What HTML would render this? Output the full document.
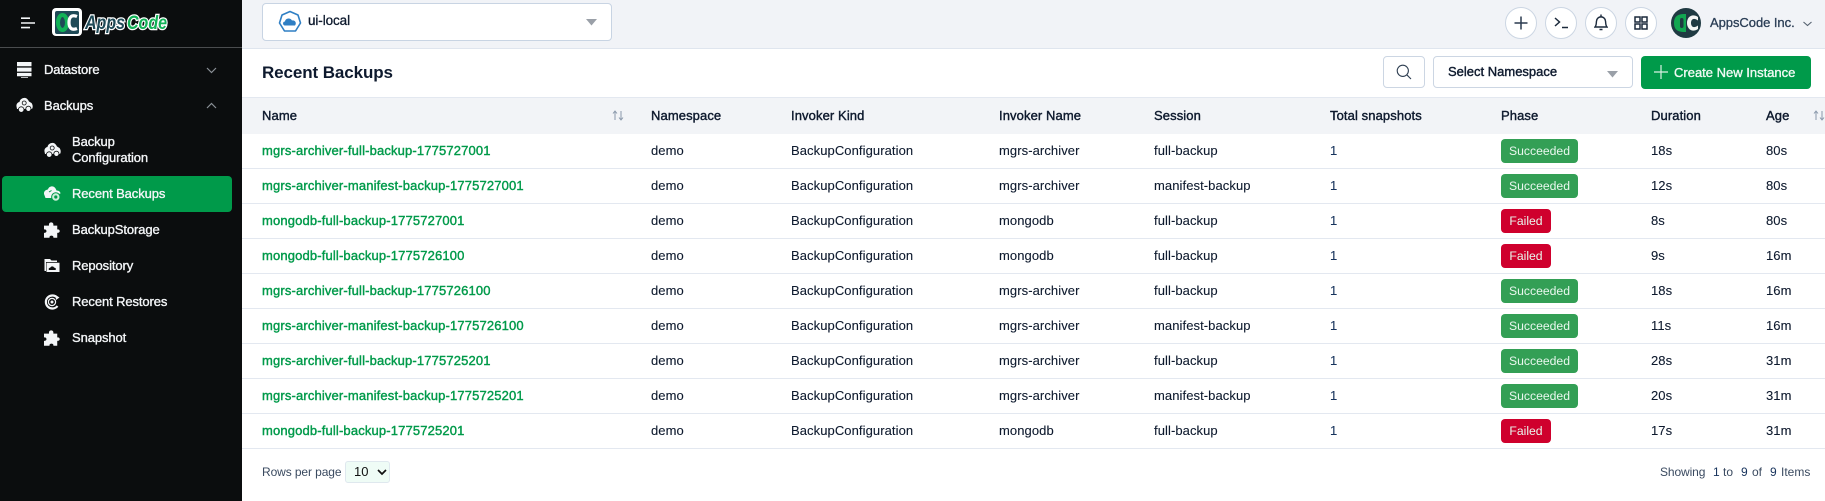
<!DOCTYPE html>
<html><head><meta charset="utf-8"><title>Recent Backups</title>
<style>
*{box-sizing:border-box}
html,body{margin:0;padding:0;width:1825px;height:501px;overflow:hidden;background:#fff;font-family:"Liberation Sans",Arial,sans-serif;color:#0e1a2e}
.a{position:absolute;white-space:nowrap}
.side{position:absolute;left:0;top:0;width:242px;height:501px;background:#0b0d0e;color:#f4f6f8}
.side .a{font-size:13px;line-height:16px;-webkit-text-stroke:.35px currentColor;letter-spacing:-.1px}
.side svg,.ic{position:absolute;display:block}
.row{position:absolute;left:242px;width:1583px;height:35px;border-bottom:1.5px solid #e3e8f0;font-size:13px}
.row span.c{position:absolute;top:0;line-height:33px;white-space:nowrap;letter-spacing:.08px;-webkit-text-stroke:.1px currentColor}
.row span.n{left:20px;color:#009a4a;-webkit-text-stroke:.4px #009a4a;letter-spacing:.15px}
.i{left:549px}.m{left:757px}.s{left:912px}.t{left:1088px;color:#17335c}.d{left:1409px}.g{left:1524px}
.b{position:absolute;left:1259px;top:5px;height:24px;border-radius:4px;color:#e9f7ee;font-size:12.2px;line-height:24px;text-align:center}
.ok{width:77px;background:#339f55}.no{width:50px;background:#cf002d}
.h{position:absolute;top:0;line-height:36px;font-size:13px;-webkit-text-stroke:.4px #0e1a2e;white-space:nowrap;letter-spacing:.1px}
.circ{position:absolute;top:7px;width:32px;height:32px;border-radius:50%;background:#fff;border:1px solid #ccd6e3}
</style></head><body>

<div class="side">
  <svg style="left:21px;top:17px" width="15" height="12"><path d="M0 1.2H9M0 6H14M0 10.6H9" stroke="#f4f6f8" stroke-width="1.6"/></svg>
  <svg style="left:51px;top:7px" width="122" height="31" viewBox="0 0 122 31">
    <rect x="1" y="1" width="30" height="28" rx="4" fill="#fff"/>
    <rect x="4" y="4" width="24" height="23" rx="2" fill="#1f4a57"/>
    <ellipse cx="11.500" cy="15.500" rx="4.500" ry="7.500" fill="none" stroke="#12b257" stroke-width="4"/>
    <path d="M26 9.500C20 7 18 11 18 15.500S20 24 26 21.500" fill="none" stroke="#fff" stroke-width="3.200"/>
    <text x="34" y="22" font-family="Liberation Sans,sans-serif" font-style="italic" font-weight="700" font-size="19" fill="#1f4a57" stroke="#fff" stroke-width="2.600" paint-order="stroke" textLength="40" lengthAdjust="spacingAndGlyphs">Apps</text>
    <text x="76" y="22" font-family="Liberation Sans,sans-serif" font-style="italic" font-weight="700" font-size="19" fill="#12b257" stroke="#fff" stroke-width="2.600" paint-order="stroke" textLength="40" lengthAdjust="spacingAndGlyphs">Code</text>
  </svg>
  <div style="position:absolute;left:0;top:47px;width:242px;height:1px;background:#4a4c4e"></div>

  <svg style="left:17px;top:62px" width="15" height="16"><path d="M0 0H14.500V4.300H0ZM0 5.600H14.500V9.600H0ZM0 10.900H14.500V14.200H0ZM4 15H11V15.800H4Z" fill="#f4f6f8"/></svg>
  <div class="a" style="left:44px;top:62px">Datastore</div>
  <svg style="left:206px;top:67px" width="11" height="7"><path d="M1 1L5.500 5.500L10 1" fill="none" stroke="#8a9096" stroke-width="1.200"/></svg>

  <svg style="left:16px;top:97px" width="17" height="16" viewBox="0 0 17 16"><path d="M.5 9.500C0 6.500 2.500 5 3.500 5C4 2 7 .500 9.500 1C11.500 1.500 12.500 3.500 13 4.500L15.500 6C17 8 17 10.500 16 12H1Z" fill="#f4f6f8"/><circle cx="5.200" cy="12.600" r="2.800" fill="#f4f6f8" stroke="#0b0d0e" stroke-width=".8"/><circle cx="12.400" cy="11.800" r="2.600" fill="#f4f6f8" stroke="#0b0d0e" stroke-width=".8"/><circle cx="8.200" cy="6" r="2" fill="none" stroke="#0b0d0e" stroke-width=".8"/></svg>
  <div class="a" style="left:44px;top:98px">Backups</div>
  <svg style="left:206px;top:102px" width="11" height="7"><path d="M1 6L5.500 1.500L10 6" fill="none" stroke="#8a9096" stroke-width="1.200"/></svg>

  <svg style="left:44px;top:142px" width="17" height="16" viewBox="0 0 17 16"><path d="M.5 9.500C0 6.500 2.500 5 3.500 5C4 2 7 .500 9.500 1C11.500 1.500 12.500 3.500 13 4.500L15.500 6C17 8 17 10.500 16 12H1Z" fill="#f4f6f8"/><circle cx="5.200" cy="12.600" r="2.800" fill="#f4f6f8" stroke="#0b0d0e" stroke-width=".8"/><circle cx="12.400" cy="11.800" r="2.600" fill="#f4f6f8" stroke="#0b0d0e" stroke-width=".8"/><circle cx="8.200" cy="6" r="2" fill="none" stroke="#0b0d0e" stroke-width=".8"/></svg>
  <div class="a" style="left:72px;top:134px">Backup</div>
  <div class="a" style="left:72px;top:150px">Configuration</div>

  <div style="position:absolute;left:2px;top:176px;width:230px;height:36px;border-radius:4px;background:#009a4a"></div>
  <svg style="left:44px;top:186px" width="17" height="16" viewBox="0 0 17 16"><path d="M0 8C-.5 5 2.500 3.500 4 3.500C4.500 1 7 0 9 .5C11 1 12 3 12.500 4.500C15 4.500 16.500 6 16.500 7.500L15 8H10V12H1.500Z" fill="#f4f6f8"/><circle cx="11.800" cy="11" r="4.200" fill="#cdeeda" stroke="#009a4a"/><circle cx="11.800" cy="11" r="1.600" fill="#009a4a"/><path d="M5 6L7.500 4.500" stroke="#009a4a"/></svg>
  <div class="a" style="left:72px;top:186px">Recent Backups</div>

  <svg style="left:44px;top:222px" width="16" height="16" viewBox="1 1 14.500 14"><path d="M5.500 3C5.500 .500 9.500 .500 9.500 3V4H13V7.500C16 7 16 11.200 13 10.500V15H9.500C10 12.500 5.500 12.500 6 15H1V10.500C4 11.200 4 7 1 7.500V4H5.500Z" fill="#f4f6f8"/></svg>
  <div class="a" style="left:72px;top:222px">BackupStorage</div>

  <svg style="left:44px;top:258px" width="16" height="15" viewBox="0 0 16 15"><path d="M.5 1H6L7.500 2.500H13V4H2V13H.5ZM2.500 4.700H15.500V14H2.500Z" fill="#f4f6f8"/><path d="M5 12C4 10.500 5.500 9.700 6.300 9.800C6.800 8 9.500 8 10 9.600C11.500 9.500 12.500 10.800 11.500 12Z" fill="#0b0d0e"/></svg>
  <div class="a" style="left:72px;top:258px">Repository</div>

  <svg style="left:44px;top:294px" width="16" height="16" viewBox="0 0 16 16"><path d="M13.500 4A6.500 6.500 0 1 0 13.500 12" fill="none" stroke="#f4f6f8" stroke-width="2.200"/><circle cx="8" cy="8" r="3.600" fill="none" stroke="#f4f6f8" stroke-width="1.200"/><circle cx="8" cy="8" r="1.500" fill="#f4f6f8"/><path d="M11.500 1L15.500 3.500L12 6Z" fill="#f4f6f8"/></svg>
  <div class="a" style="left:72px;top:294px">Recent Restores</div>

  <svg style="left:44px;top:330px" width="16" height="16" viewBox="1 1 14.500 14"><path d="M5.500 3C5.500 .500 9.500 .500 9.500 3V4H13V7.500C16 7 16 11.200 13 10.500V15H9.500C10 12.500 5.500 12.500 6 15H1V10.500C4 11.200 4 7 1 7.500V4H5.500Z" fill="#f4f6f8"/></svg>
  <div class="a" style="left:72px;top:330px">Snapshot</div>
</div>

<!-- top bar -->
<div style="position:absolute;left:242px;top:0;width:1583px;height:49px;background:#f1f3f7;border-bottom:1px solid #dfe5ee"></div>
<div style="position:absolute;left:262px;top:3px;width:350px;height:38px;background:#fff;border:1px solid #c8d4e3;border-radius:4px"></div>
<svg class="ic" style="left:278px;top:10px" width="24" height="24" viewBox="0 0 24 24"><path d="M12 1.500L20 5L22.500 13L17.500 21H6.500L1.500 13L4 5Z" fill="#fff" stroke="#2f7fc4" stroke-width="1.600" stroke-linejoin="round"/><path d="M6.500 15.500C4.500 15 4.500 11.500 7 11.500C7.500 8 12.500 7.500 14 10.500C17 9.800 19 13 17 15.500Z" fill="#2f7fc4"/></svg>
<div class="a" style="left:308px;top:12px;font-size:13.500px;line-height:17px;-webkit-text-stroke:.3px #0e1a2e;letter-spacing:-.1px">ui-local</div>
<svg class="ic" style="left:586px;top:19px" width="12" height="7"><path d="M0 0H11L5.500 6.500Z" fill="#9aa0a8"/></svg>

<div class="circ" style="left:1505px"></div>
<svg class="ic" style="left:1514px;top:16px" width="14" height="14"><path d="M7 .500V13.500M.500 7H13.500" stroke="#2a3a4f" stroke-width="1.500"/></svg>
<div class="circ" style="left:1545px"></div>
<svg class="ic" style="left:1554px;top:17px" width="15" height="12"><path d="M1 1L5.500 5L1 9M8 10.500H14" fill="none" stroke="#1c2a3c" stroke-width="1.500"/></svg>
<div class="circ" style="left:1585px"></div>
<svg class="ic" style="left:1594px;top:14px" width="14" height="18" viewBox="0 0 14 18"><path d="M1 13C2.500 11.500 2.200 9 2.500 7C3 1.500 11 1.500 11.500 7C11.800 9 11.500 11.500 13 13ZM5.500 15.500H8.500" fill="none" stroke="#1c2a3c" stroke-width="1.400"/><path d="M7 .500V2.500" stroke="#1c2a3c" stroke-width="1.400"/></svg>
<div class="circ" style="left:1625px"></div>
<svg class="ic" style="left:1634px;top:16px" width="14" height="14"><path d="M1 1H6V6H1ZM8 1H13V6H8ZM1 8H6V13H1ZM8 8H13V13H8Z" fill="none" stroke="#1c2a3c" stroke-width="1.500"/></svg>
<svg class="ic" style="left:1671px;top:8px" width="30" height="30" viewBox="0 0 30 30"><circle cx="15" cy="15" r="15" fill="#1f3a42"/><path d="M3 15C3 6 10 6 15 6V24C10 24 3 24 3 15Z" fill="#12a651"/><rect x="9" y="10" width="3.500" height="10" rx="1.700" fill="#1f3a42"/><path d="M27 9C21 5 16 9 16 15S21 25 27 21V17.500C22 21 20 18 20 15S22 9 27 12.500Z" fill="#f4f6f4"/></svg>
<div class="a" style="left:1710px;top:14px;font-size:13px;line-height:17px;color:#2a3d55;-webkit-text-stroke:.3px #2a3d55;letter-spacing:-.05px">AppsCode Inc.</div>
<svg class="ic" style="left:1803px;top:21px" width="9" height="6"><path d="M.500 1L4.500 4.500L8.500 1" fill="none" stroke="#55616f" stroke-width="1.100"/></svg>

<!-- title band -->
<div class="a" style="left:262px;top:62px;font-size:17px;line-height:22px;font-weight:700;letter-spacing:-.1px">Recent Backups</div>
<div style="position:absolute;left:1383px;top:56px;width:42px;height:32px;border:1px solid #ccd6e3;border-radius:4px;background:#fff"></div>
<svg class="ic" style="left:1396px;top:64px" width="16" height="16"><circle cx="6.800" cy="6.800" r="5.600" fill="none" stroke="#2f3f52" stroke-width="1.100"/><path d="M10.800 10.800L15 15" stroke="#2f3f52" stroke-width="1.100"/></svg>
<div style="position:absolute;left:1433px;top:56px;width:200px;height:32px;border:1px solid #ccd6e3;border-radius:4px;background:#fff"></div>
<div class="a" style="left:1448px;top:63px;font-size:13px;line-height:17px;-webkit-text-stroke:.4px #0e1a2e;letter-spacing:0">Select Namespace</div>
<svg class="ic" style="left:1607px;top:71px" width="12" height="7"><path d="M0 0H11L5.500 6.500Z" fill="#9aa0a8"/></svg>
<div style="position:absolute;left:1641px;top:56px;width:170px;height:33px;border-radius:4px;background:#009a4a"></div>
<svg class="ic" style="left:1654px;top:65px" width="14" height="14"><path d="M7 0V14M0 7H14" stroke="#d8f0e2" stroke-width="1.200"/></svg>
<div class="a" style="left:1674px;top:64px;font-size:13px;line-height:17px;color:#f2faf5;-webkit-text-stroke:.35px #f2faf5">Create New Instance</div>

<!-- table header -->
<div style="position:absolute;left:242px;top:97px;width:1583px;height:37px;background:#f2f4f7;border-top:1px solid #e3e8f0">
  <span class="h" style="left:20px">Name</span>
  <span class="h" style="left:409px">Namespace</span>
  <span class="h" style="left:549px">Invoker Kind</span>
  <span class="h" style="left:757px">Invoker Name</span>
  <span class="h" style="left:912px">Session</span>
  <span class="h" style="left:1088px">Total snapshots</span>
  <span class="h" style="left:1259px">Phase</span>
  <span class="h" style="left:1409px">Duration</span>
  <span class="h" style="left:1524px">Age</span>
</div>
<svg class="ic" style="left:612px;top:110px" width="12" height="11"><path d="M3 10V1.500M1 3.500L3 1L5 3.500M9 1V9.500M7 7.500L9 10L11 7.500" fill="none" stroke="#8a99ab" stroke-width="1"/></svg>
<svg class="ic" style="left:1813px;top:110px" width="12" height="11"><path d="M3 10V1.500M1 3.500L3 1L5 3.500M9 1V9.500M7 7.500L9 10L11 7.500" fill="none" stroke="#8a99ab" stroke-width="1"/></svg>

<!-- rows -->
<div class="row" style="top:134px"><span class="c n">mgrs-archiver-full-backup-1775727001</span><span class="c" style="left:409px">demo</span><span class="c i">BackupConfiguration</span><span class="c m">mgrs-archiver</span><span class="c s">full-backup</span><span class="c t">1</span><div class="b ok">Succeeded</div><span class="c d">18s</span><span class="c g">80s</span></div>
<div class="row" style="top:169px"><span class="c n">mgrs-archiver-manifest-backup-1775727001</span><span class="c" style="left:409px">demo</span><span class="c i">BackupConfiguration</span><span class="c m">mgrs-archiver</span><span class="c s">manifest-backup</span><span class="c t">1</span><div class="b ok">Succeeded</div><span class="c d">12s</span><span class="c g">80s</span></div>
<div class="row" style="top:204px"><span class="c n">mongodb-full-backup-1775727001</span><span class="c" style="left:409px">demo</span><span class="c i">BackupConfiguration</span><span class="c m">mongodb</span><span class="c s">full-backup</span><span class="c t">1</span><div class="b no">Failed</div><span class="c d">8s</span><span class="c g">80s</span></div>
<div class="row" style="top:239px"><span class="c n">mongodb-full-backup-1775726100</span><span class="c" style="left:409px">demo</span><span class="c i">BackupConfiguration</span><span class="c m">mongodb</span><span class="c s">full-backup</span><span class="c t">1</span><div class="b no">Failed</div><span class="c d">9s</span><span class="c g">16m</span></div>
<div class="row" style="top:274px"><span class="c n">mgrs-archiver-full-backup-1775726100</span><span class="c" style="left:409px">demo</span><span class="c i">BackupConfiguration</span><span class="c m">mgrs-archiver</span><span class="c s">full-backup</span><span class="c t">1</span><div class="b ok">Succeeded</div><span class="c d">18s</span><span class="c g">16m</span></div>
<div class="row" style="top:309px"><span class="c n">mgrs-archiver-manifest-backup-1775726100</span><span class="c" style="left:409px">demo</span><span class="c i">BackupConfiguration</span><span class="c m">mgrs-archiver</span><span class="c s">manifest-backup</span><span class="c t">1</span><div class="b ok">Succeeded</div><span class="c d">11s</span><span class="c g">16m</span></div>
<div class="row" style="top:344px"><span class="c n">mgrs-archiver-full-backup-1775725201</span><span class="c" style="left:409px">demo</span><span class="c i">BackupConfiguration</span><span class="c m">mgrs-archiver</span><span class="c s">full-backup</span><span class="c t">1</span><div class="b ok">Succeeded</div><span class="c d">28s</span><span class="c g">31m</span></div>
<div class="row" style="top:379px"><span class="c n">mgrs-archiver-manifest-backup-1775725201</span><span class="c" style="left:409px">demo</span><span class="c i">BackupConfiguration</span><span class="c m">mgrs-archiver</span><span class="c s">manifest-backup</span><span class="c t">1</span><div class="b ok">Succeeded</div><span class="c d">20s</span><span class="c g">31m</span></div>
<div class="row" style="top:414px"><span class="c n">mongodb-full-backup-1775725201</span><span class="c" style="left:409px">demo</span><span class="c i">BackupConfiguration</span><span class="c m">mongodb</span><span class="c s">full-backup</span><span class="c t">1</span><div class="b no">Failed</div><span class="c d">17s</span><span class="c g">31m</span></div>

<!-- footer -->
<div class="a" style="left:262px;top:464px;font-size:12px;line-height:16px;color:#3a4a60;letter-spacing:-.1px">Rows per page</div>
<div style="position:absolute;left:345px;top:461px;width:45px;height:22px;background:#effcf6;border:1px solid #dfe8ee;border-radius:3px"></div>
<div class="a" style="left:354px;top:463px;font-size:13px;line-height:18px;color:#111">10</div>
<svg class="ic" style="left:377px;top:469px" width="10" height="7"><path d="M1 1L5 5L9 1" fill="none" stroke="#111" stroke-width="1.700"/></svg>
<div class="a" style="left:1660px;top:464px;font-size:12px;line-height:16px;color:#3a4a60;letter-spacing:-.1px">Showing</div>
<div class="a" style="left:1713px;top:464px;font-size:12px;line-height:16px;color:#17335c">1</div>
<div class="a" style="left:1723px;top:464px;font-size:12px;line-height:16px;color:#3a4a60">to</div>
<div class="a" style="left:1741px;top:464px;font-size:12px;line-height:16px;color:#17335c">9</div>
<div class="a" style="left:1752px;top:464px;font-size:12px;line-height:16px;color:#3a4a60">of</div>
<div class="a" style="left:1770px;top:464px;font-size:12px;line-height:16px;color:#17335c">9</div>
<div class="a" style="left:1781px;top:464px;font-size:12px;line-height:16px;color:#3a4a60">Items</div>
</body></html>
